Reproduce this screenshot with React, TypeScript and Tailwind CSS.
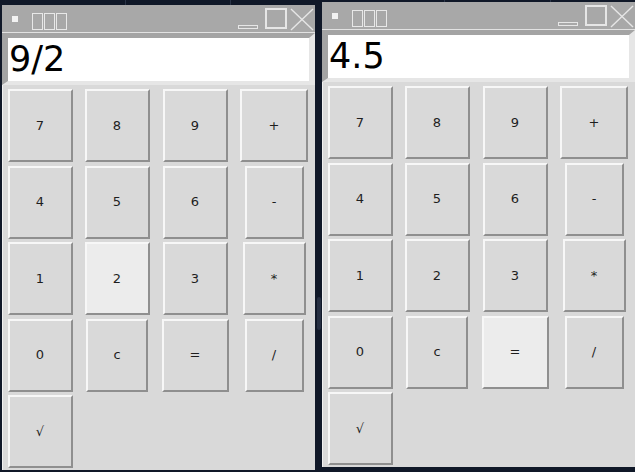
import React from "react";

type Btn = { label: string; w: number };

const rows: Btn[][] = [
  [
    { label: "7", w: 65 },
    { label: "8", w: 65 },
    { label: "9", w: 65 },
    { label: "+", w: 68 },
  ],
  [
    { label: "4", w: 65 },
    { label: "5", w: 65 },
    { label: "6", w: 65 },
    { label: "-", w: 59 },
  ],
  [
    { label: "1", w: 65 },
    { label: "2", w: 65 },
    { label: "3", w: 65 },
    { label: "*", w: 63 },
  ],
  [
    { label: "0", w: 65 },
    { label: "c", w: 62 },
    { label: "=", w: 67 },
    { label: "/", w: 59 },
  ],
  [{ label: "√", w: 65 }],
];

function TitleBar() {
  return (
    <div className="relative h-[27px] shrink-0 bg-[#a8a8a8]">
      <div className="absolute left-[10px] top-[11px] h-[6px] w-[6px] bg-[#f2f2f2]" />
      <div className="absolute left-[30px] top-[8px] flex gap-[1px]" title="计算器">
        <span className="block h-[17px] w-[11px] border border-[#e8e8e8]" />
        <span className="block h-[17px] w-[11px] border border-[#e8e8e8]" />
        <span className="block h-[17px] w-[11px] border border-[#e8e8e8]" />
      </div>
      <div className="absolute left-[236px] top-[20px] h-[4px] w-[20px] border border-[#e6e6e6]" />
      <div className="absolute left-[263px] top-[3px] h-[21px] w-[22px] border-2 border-[#e6e6e6]" />
      <svg
        className="absolute left-[288px] top-[3px]"
        width="24"
        height="23"
        viewBox="0 0 24 23"
      >
        <line x1="1" y1="1" x2="23" y2="22" stroke="#e6e6e6" strokeWidth="1.4" />
        <line x1="23" y1="1" x2="1" y2="22" stroke="#e6e6e6" strokeWidth="1.4" />
      </svg>
    </div>
  );
}

function CalcWindow({ value, active }: { value: string; active: string }) {
  return (
    <div className="flex h-[465px] w-[313px] flex-col font-['DejaVu_Sans',sans-serif]">
      <TitleBar />
      <div className="flex flex-1 flex-col bg-[#d9d9d9] shadow-[inset_1px_0_0_#f0f0f0]">
        <div className="h-px bg-[#e2e2e2]" />
        <div className="flex h-[52px] items-center border-t-[5px] border-l-[6px] border-r-[6px] border-b-[4px] border-t-[#a4a4a4] border-l-[#a4a4a4] border-r-[#e6e6e6] border-b-[#e6e6e6] bg-white">
          <span className="pl-[1px] text-[35px] leading-none text-black">{value}</span>
        </div>
        <div className="mt-[4px] grid grid-cols-[76px_78px_78px_80px] auto-rows-[73px] gap-y-[3.5px]">
          {rows.map((row, ri) =>
            row.map((b, ci) => (
              <div
                key={`${ri}-${ci}`}
                style={{ width: b.w }}
                className={`flex h-[73px] items-center justify-center justify-self-center border-2 border-t-[#f7f7f7] border-l-[#f7f7f7] border-r-[#8f8f8f] border-b-[#8f8f8f] text-[13px] text-[#1e1e1e] ${
                  b.label === active ? "bg-[#ececec]" : "bg-[#d9d9d9]"
                }`}
              >
                {b.label}
              </div>
            ))
          )}
        </div>
      </div>
    </div>
  );
}

export default function App() {
  return (
    <div className="relative flex h-[472px] w-[635px] items-start overflow-hidden bg-[#101828]">
      <div className="absolute left-[125px] top-0 h-[6px] w-px bg-[#2a3447]" />
      <div className="absolute left-[230px] top-0 h-[6px] w-px bg-[#2a3447]" />
      <div className="absolute left-[444px] top-0 h-[3px] w-px bg-[#2a3447]" />
      <div className="absolute left-[550px] top-0 h-[3px] w-px bg-[#2a3447]" />
      <div className="ml-[2px] mt-[5px]">
        <CalcWindow value="9/2" active="2" />
      </div>
      <div className="flex w-[7px] flex-col items-center">
        <div className="mt-[297px] h-[33px] w-[4px] rounded-sm bg-[#262f42]" />
      </div>
      <div className="mt-[2px]">
        <CalcWindow value="4.5" active="=" />
      </div>
    </div>
  );
}
